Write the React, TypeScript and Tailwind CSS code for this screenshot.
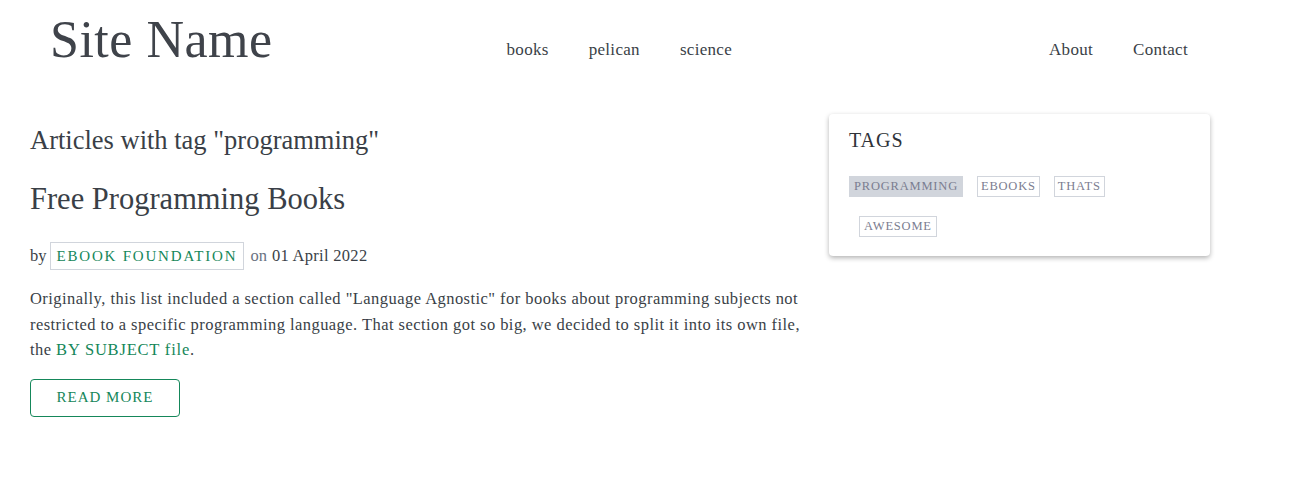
export default function App() {
  const serif = { fontFamily: '"Liberation Serif", "DejaVu Serif", serif' };
  return (
    <div className="min-h-[498px] bg-white text-[#3a3f47]" style={serif}>
      <div className="ml-[30px] w-[1180px]">
        <header className="flex items-start pt-[10px]">
          <a className="ml-[20px] text-[52px] leading-[60px] text-[#3f434a] tracking-[0.5px]">Site Name</a>
          <nav className="ml-[214px] mt-[27px] flex text-[17px] tracking-[0.3px]">
            <a className="px-5">books</a>
            <a className="px-5">pelican</a>
            <a className="px-5">science</a>
          </nav>
          <nav className="ml-auto mr-[2px] mt-[27px] flex text-[17px] tracking-[0.3px]">
            <a className="px-5">About</a>
            <a className="px-5">Contact</a>
          </nav>
        </header>

        <main className="mt-[44px] flex items-start gap-[29px]">
          <section className="w-[770px]">
            <h1 className="mt-[10px] text-[26.5px] leading-[32px]">Articles with tag "programming"</h1>
            <h2 className="mt-[25px] text-[30.5px] leading-[36px]">Free Programming Books</h2>
            <div className="mt-[25px] flex items-center text-[16.5px]">
              <span>by</span>
              <a className="ml-[3px] border border-gray-300 px-[6px] h-[28px] flex items-center uppercase tracking-[1.8px] text-[#15875a] text-[15px]">
                Ebook Foundation
              </a>
              <span className="ml-[6px] text-gray-500">on</span>
              <span className="ml-[5px] tracking-[0.3px]">01 April 2022</span>
            </div>
            <p className="mt-[16px] text-[16.5px] leading-[25.5px] tracking-[0.45px]">
              Originally, this list included a section called "Language Agnostic" for books about programming subjects not
              <br />
              restricted to a specific programming language. That section got so big, we decided to split it into its own file,
              <br />
              the <a className="text-[#15875a] tracking-[0.8px]">BY SUBJECT file</a>.
            </p>
            <button className="mt-[16px] w-[150px] h-[38px] rounded border border-[#15875a] text-[#15875a] uppercase tracking-[1px] text-[15px]">
              Read More
            </button>
          </section>

          <aside className="w-[381px] rounded bg-white shadow-[0_2px_5px_rgba(0,0,0,0.3)] px-[20px] pt-[12px] pb-[19px]">
            <h3 className="text-[20px] leading-[28px] tracking-[1px] text-[#2f3339]">TAGS</h3>
            <div className="mt-[22px] flex flex-wrap gap-x-[14px] gap-y-[19px] text-[12.5px] uppercase tracking-[0.8px] text-[#7b7d90]">
              <a className="h-[21px] flex items-center px-[5px] bg-gray-300">Programming</a>
              <a className="h-[21px] flex items-center px-[3px] border border-gray-300">Ebooks</a>
              <a className="h-[21px] flex items-center px-[3px] border border-gray-300">Thats</a>
              <a className="ml-[10px] h-[21px] flex items-center px-[4px] border border-gray-300">Awesome</a>
            </div>
          </aside>
        </main>
      </div>
    </div>
  );
}
